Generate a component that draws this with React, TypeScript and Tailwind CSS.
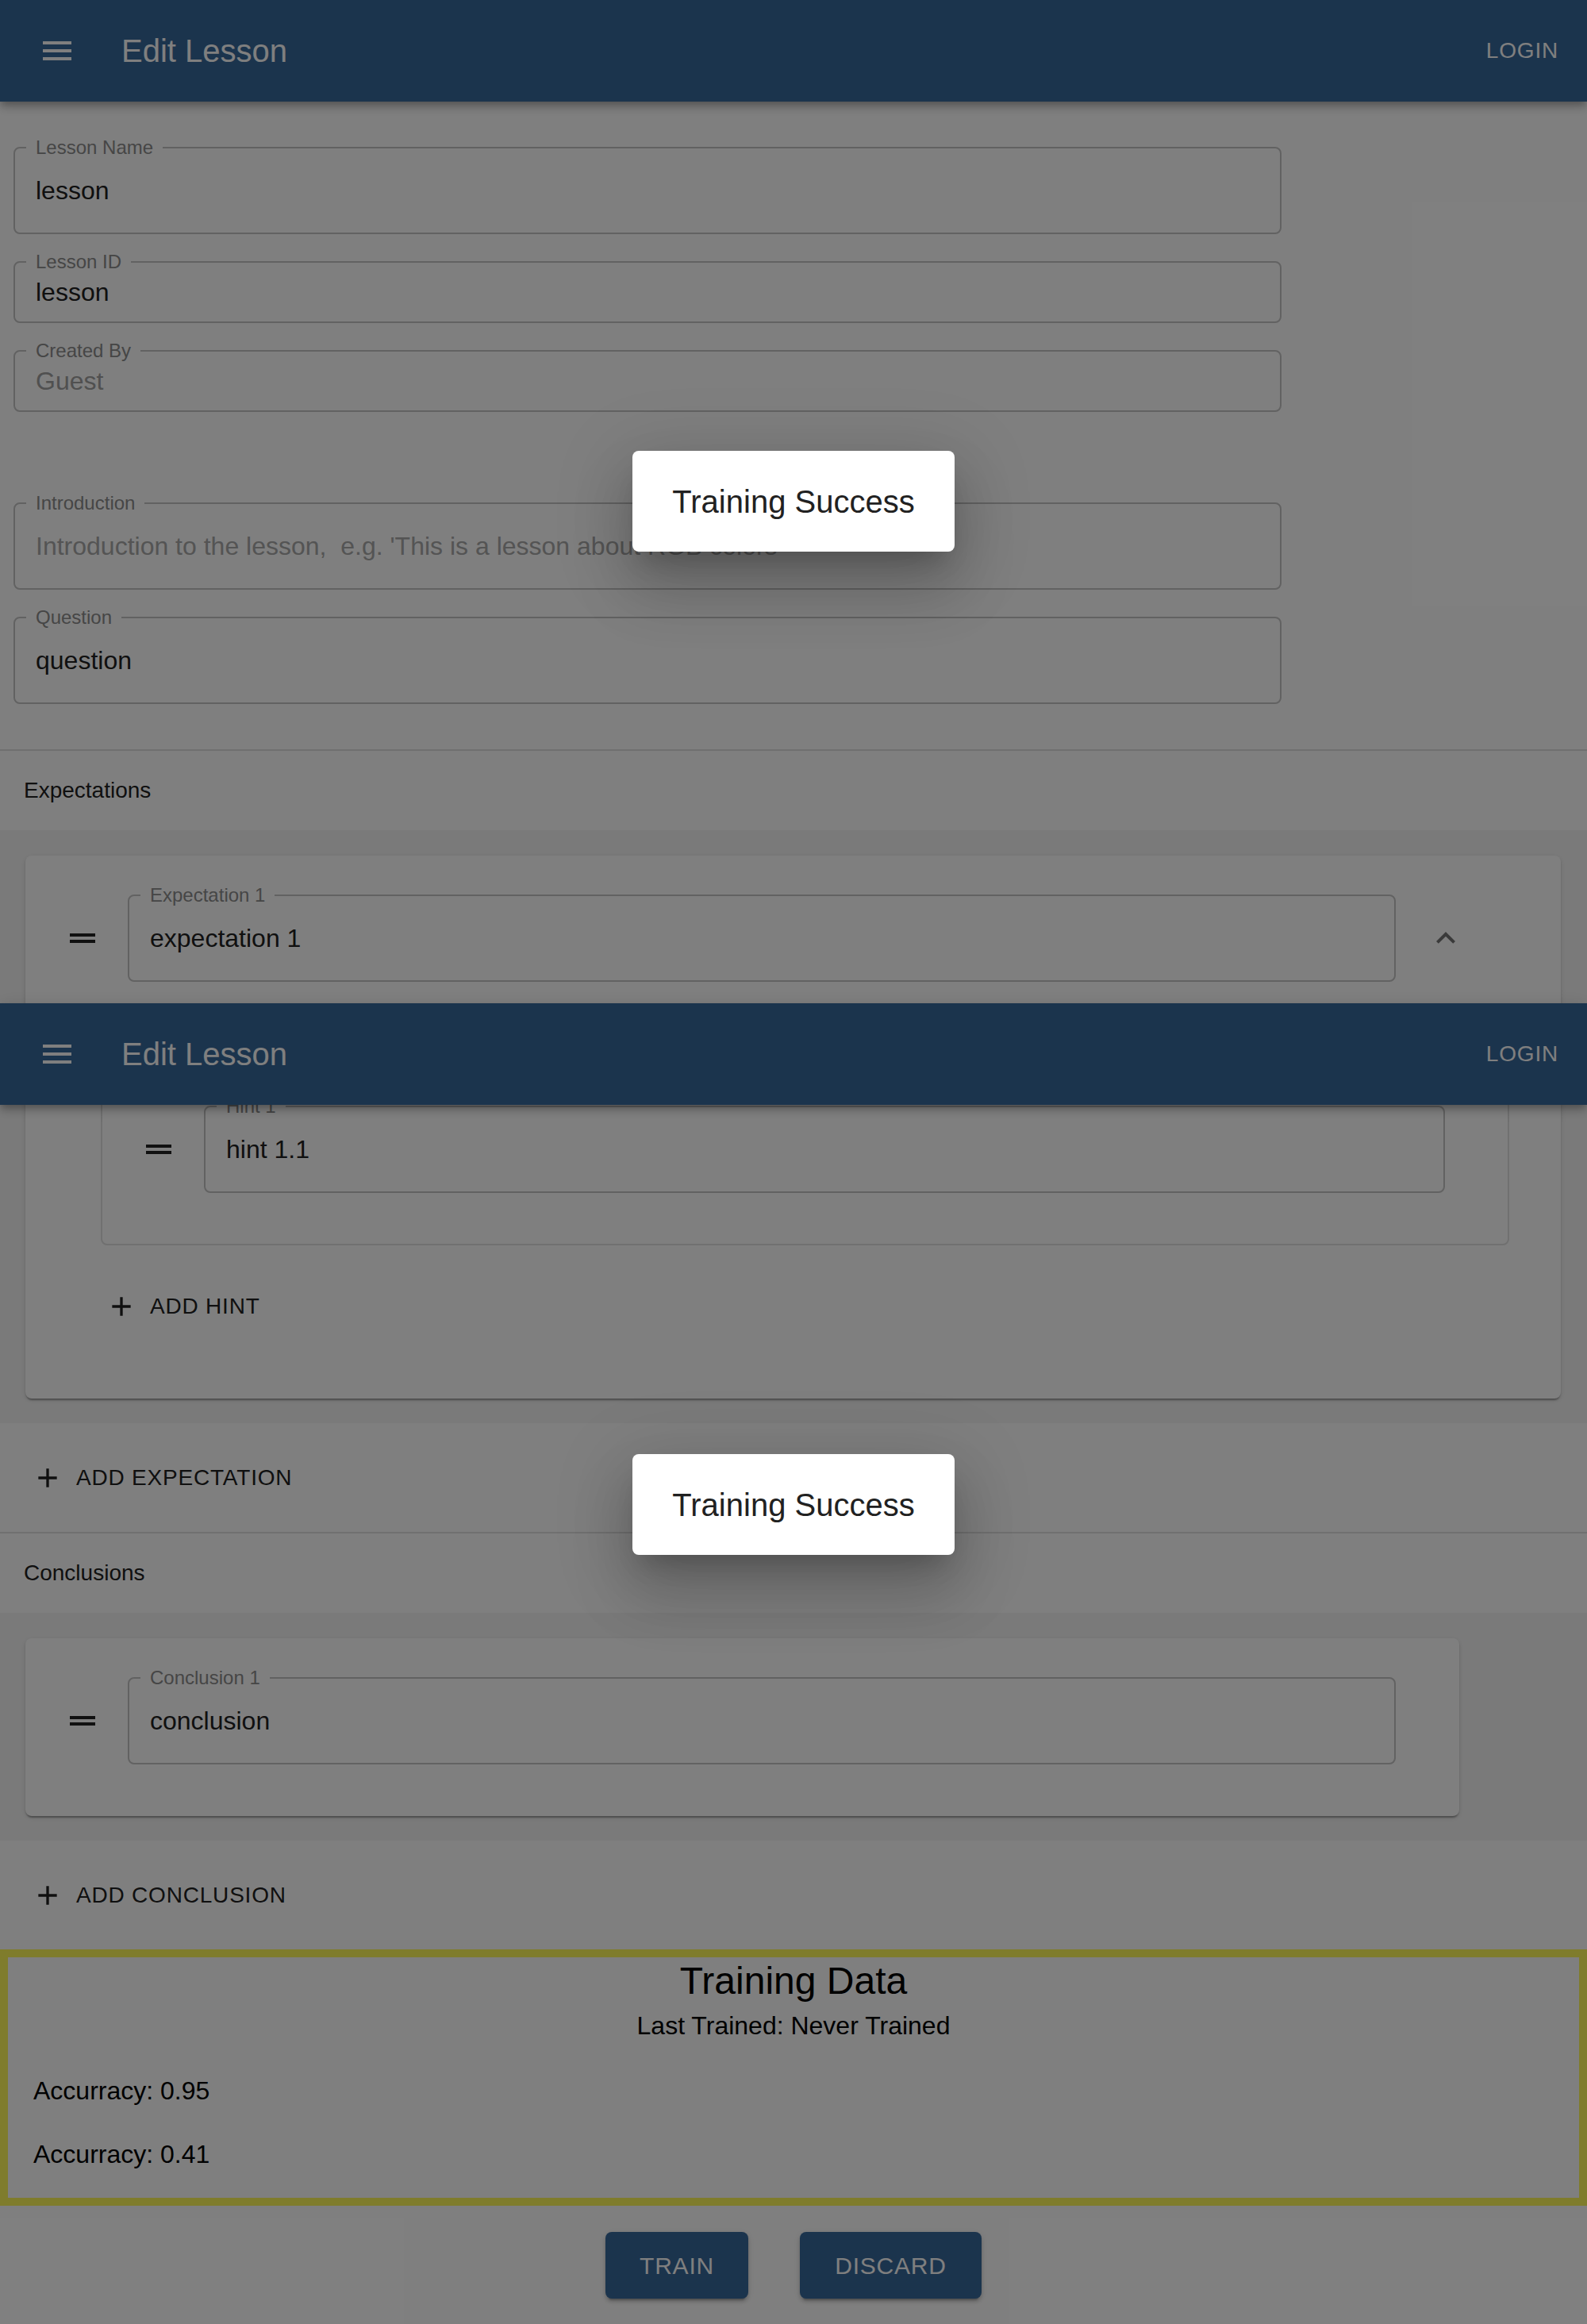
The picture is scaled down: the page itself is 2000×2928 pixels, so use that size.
import React from "react";
import clsx from "clsx";

type FieldProps = {
  label: string;
  value?: string;
  placeholder?: string;
  disabled?: boolean;
  className?: string;
};

// outlined text field, label sits in a notch on the top border
function Field(props: FieldProps) {
  return (
    <div
      className={clsx(
        "relative flex items-center rounded-[8px] border-2 border-[#c4c4c4] pl-[26px]",
        props.className
      )}
    >
      <span className="absolute -top-[13px] left-[14px] bg-white px-[12px] text-[24px] leading-[24px] text-[#8c8c8c]">
        {props.label}
      </span>
      {props.value ? (
        <span
          className={clsx(
            "text-[32px] leading-[40px]",
            props.disabled ? "text-[#a0a0a0]" : "text-[#212121]"
          )}
        >
          {props.value}
        </span>
      ) : (
        <span className="whitespace-pre text-[32px] leading-[40px] text-[#a8a8a8]">
          {props.placeholder}
        </span>
      )}
    </div>
  );
}

function MenuIcon() {
  return (
    <svg viewBox="0 0 24 24" className="h-[48px] w-[48px]" fill="#ffffff">
      <path d="M3 18h18v-2H3v2zm0-5h18v-2H3v2zm0-7v2h18V6H3z" />
    </svg>
  );
}

function DragIcon() {
  return (
    <svg viewBox="0 0 24 24" className="h-[48px] w-[48px] shrink-0" fill="#222222">
      <path d="M20 9H4v2h16V9zM4 15h16v-2H4v2z" />
    </svg>
  );
}

function ExpandLessIcon() {
  return (
    <svg viewBox="0 0 24 24" className="h-[48px] w-[48px] shrink-0" fill="#757575">
      <path d="M12 8l-6 6 1.41 1.41L12 10.83l4.59 4.58L18 14z" />
    </svg>
  );
}

function AddIcon() {
  return (
    <svg viewBox="0 0 24 24" className="mr-[16px] h-[40px] w-[40px] shrink-0" fill="#212121">
      <path d="M19 13h-6v6h-2v-6H5v-2h6V5h2v6h6v2z" />
    </svg>
  );
}

function AddButton({ label, className }: { label: string; className?: string }) {
  return (
    <div className={clsx("flex h-[72px] items-center px-[16px]", className)}>
      <AddIcon />
      <span className="text-[28px] font-medium uppercase tracking-[0.8px] text-[#212121]">
        {label}
      </span>
    </div>
  );
}

function AppBar({ className }: { className?: string }) {
  return (
    <header
      className={clsx(
        "flex h-[128px] w-[2000px] items-center bg-[#37689b] shadow-[0_4px_8px_-2px_rgba(0,0,0,0.2),0_8px_10px_0_rgba(0,0,0,0.14),0_2px_20px_0_rgba(0,0,0,0.12)]",
        className
      )}
    >
      <div className="ml-[48px]">
        <MenuIcon />
      </div>
      <span className="ml-[57px] text-[40px] leading-[48px] text-white">Edit Lesson</span>
      <span className="ml-auto mr-[36px] text-[28px] font-medium uppercase tracking-[0.8px] text-white">
        Login
      </span>
    </header>
  );
}

function TrainingDialog({ className }: { className?: string }) {
  return (
    <div
      className={clsx(
        "absolute left-[797px] flex h-[127px] w-[406px] items-center justify-center rounded-[8px] bg-white shadow-[0_22px_30px_-14px_rgba(0,0,0,0.2),0_48px_76px_6px_rgba(0,0,0,0.14),0_18px_92px_16px_rgba(0,0,0,0.12)]",
        className
      )}
    >
      <span className="text-[40px] leading-[48px] text-[#212121]">Training Success</span>
    </div>
  );
}

const cardShadow =
  "shadow-[0_4px_2px_-2px_rgba(0,0,0,0.2),0_2px_2px_0_rgba(0,0,0,0.14),0_2px_6px_0_rgba(0,0,0,0.12)]";

export default function App() {
  return (
    <div className="relative h-[2928px] w-[2000px] overflow-hidden bg-white font-['Liberation_Sans',Arial,sans-serif]">
      <AppBar className="relative" />

      {/* lesson fields */}
      <div className="flex w-[1615px] flex-col pl-[17px] pt-[57px]">
        <Field className="h-[110px]" label="Lesson Name" value="lesson" />
        <Field className="mt-[34px] h-[78px]" label="Lesson ID" value="lesson" />
        <Field className="mt-[34px] h-[78px]" label="Created By" value="Guest" disabled />
        <Field
          className="mt-[114px] h-[110px]"
          label="Introduction"
          placeholder="Introduction to the lesson,  e.g. 'This is a lesson about RGB colors'"
        />
        <Field className="mt-[34px] h-[110px]" label="Question" value="question" />
      </div>

      <div className="mt-[57px] h-[2px] bg-[#e0e0e0]" />

      {/* expectations */}
      <div className="flex h-[100px] items-center pl-[30px] text-[28px] text-[#212121]">
        Expectations
      </div>
      <div className="bg-[#f5f5f5] px-[32px] pb-[31px] pt-[32px]">
        <div className={clsx("w-[1935px] rounded-[8px] bg-white pb-[80px] pt-[49px]", cardShadow)}>
          <div className="flex items-center">
            <div className="ml-[48px]">
              <DragIcon />
            </div>
            <Field className="ml-[33px] h-[110px] w-[1598px]" label="Expectation 1" value="expectation 1" />
            <div className="ml-[39px]">
              <ExpandLessIcon />
            </div>
          </div>

          <div className="ml-[95px] mt-[53px] w-[1775px] rounded-[8px] border-2 border-[#e0e0e0] pb-[64px] pl-[47px] pt-[101px]">
            <div className="flex items-center">
              <DragIcon />
              <Field className="ml-[33px] h-[110px] w-[1564px]" label="Hint 1" value="hint 1.1" />
            </div>
          </div>

          <AddButton label="Add Hint" className="ml-[85px] mt-[41px]" />
        </div>
      </div>
      <div className="flex h-[137px] items-center pl-[24px]">
        <AddButton label="Add Expectation" />
      </div>

      <div className="h-[2px] bg-[#e0e0e0]" />

      {/* conclusions */}
      <div className="flex h-[100px] items-center pl-[30px] text-[28px] text-[#212121]">
        Conclusions
      </div>
      <div className="bg-[#f5f5f5] px-[32px] pb-[31px] pt-[32px]">
        <div className={clsx("w-[1807px] rounded-[8px] bg-white pb-[65px] pt-[49px]", cardShadow)}>
          <div className="flex items-center">
            <div className="ml-[48px]">
              <DragIcon />
            </div>
            <Field className="ml-[33px] h-[110px] w-[1598px]" label="Conclusion 1" value="conclusion" />
          </div>
        </div>
      </div>
      <div className="flex h-[137px] items-center pl-[24px]">
        <AddButton label="Add Conclusion" />
      </div>

      {/* training data */}
      <div className="border-[10px] border-[#fff958] pb-[31px] pt-[2px] text-black">
        <div className="text-center text-[48px] leading-[56px]">Training Data</div>
        <div className="mt-[4px] text-center text-[32px] leading-[48px]">Last Trained: Never Trained</div>
        <div className="ml-[32px] mt-[34px] text-[32px] leading-[48px]">Accurracy: 0.95</div>
        <div className="ml-[32px] mt-[32px] text-[32px] leading-[48px]">Accurracy: 0.41</div>
      </div>

      <div className="mt-[33px] flex justify-center gap-[65px] pb-[32px]">
        <button className="flex h-[84px] w-[180px] items-center justify-center rounded-[8px] bg-[#37689b] text-[30px] font-medium uppercase tracking-[0.8px] text-white shadow-[0_6px_2px_-4px_rgba(0,0,0,0.2),0_4px_4px_0_rgba(0,0,0,0.14),0_2px_10px_0_rgba(0,0,0,0.12)]">
          Train
        </button>
        <button className="flex h-[84px] w-[229px] items-center justify-center rounded-[8px] bg-[#37689b] text-[30px] font-medium uppercase tracking-[0.8px] text-white shadow-[0_6px_2px_-4px_rgba(0,0,0,0.2),0_4px_4px_0_rgba(0,0,0,0.14),0_2px_10px_0_rgba(0,0,0,0.12)]">
          Discard
        </button>
      </div>

      {/* fixed app bar, captured again further down the page */}
      <AppBar className="absolute left-0 top-[1264px]" />

      {/* modal backdrop and the success dialog */}
      <div className="absolute inset-0 bg-black/50" />
      <TrainingDialog className="top-[568px]" />
      <TrainingDialog className="top-[1832px]" />
    </div>
  );
}
